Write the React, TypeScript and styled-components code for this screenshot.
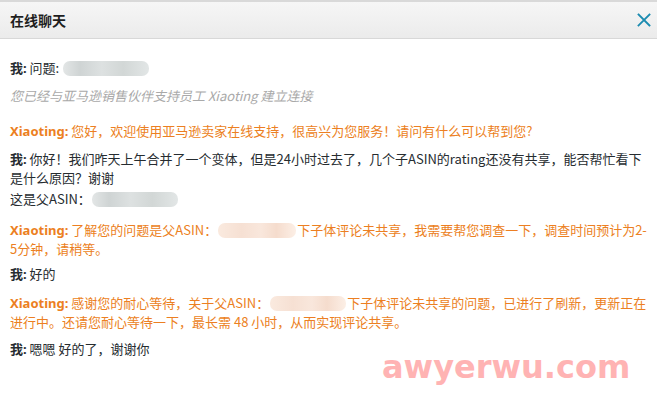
import React from "react";
import styled, { createGlobalStyle } from "styled-components";

const Global = createGlobalStyle`
  html, body { margin: 0; padding: 0; background: #fff; }
  body { font-family: "Noto Sans", "Noto Sans CJK SC", sans-serif; }
`;

const Dialog = styled.div`
  position: relative;
  width: 657px;
  height: 400px;
  background: #fff;
  overflow: hidden;
  border-top: 2px solid #d9d9d9;
  box-sizing: border-box;
`;

const Header = styled.div`
  height: 36px;
  display: flex;
  align-items: center;
  justify-content: space-between;
  padding: 0 4px 0 10px;
  background: linear-gradient(#f6f6f6, #ebebeb);
  border-bottom: 1px solid #d8d8d8;
`;

const Title = styled.div`
  font-family: "Noto Sans CJK SC", sans-serif;
  font-size: 14px;
  font-weight: 700;
  color: #1e1e1e;
`;

const Close = styled.button`
  border: 0;
  background: none;
  padding: 0;
  width: 18px;
  height: 18px;
  display: flex;
  align-items: center;
  justify-content: center;
  cursor: pointer;
`;

const Body = styled.div`
  padding: 19px 10px 0 10px;
  display: flex;
  flex-direction: column;
`;

const Msg = styled.div<{ $gap: number; $tone?: "me" | "agent" | "system" }>`
  margin-top: ${(p) => p.$gap}px;
  font-family: "Noto Sans CJK SC", sans-serif;
  font-size: 13px;
  line-height: 19px;
  color: ${(p) =>
    p.$tone === "agent" ? "#ec7f22" : p.$tone === "system" ? "#a9a9a9" : "#262c30"};
  font-style: ${(p) => (p.$tone === "system" ? "italic" : "normal")};
`;

const Who = styled.b`
  font-weight: 700;
  line-height: 1;
  font-family: "Noto Sans", "Noto Sans CJK SC", sans-serif;
`;

const Blur = styled.span<{ $w: number; $tint: "gray" | "peach" }>`
  display: inline-block;
  vertical-align: -3px;
  width: ${(p) => p.$w}px;
  height: 15px;
  border-radius: 7px;
  margin: 0 1px;
  background: ${(p) =>
    p.$tint === "gray"
      ? "linear-gradient(90deg, #e3e6e6 0%, #cfd4d4 20%, #dde1e1 45%, #d2d7d6 70%, #e2e6e6 100%)"
      : "linear-gradient(90deg, #faeadf 0%, #f6e0d3 30%, #f9e7dc 55%, #f5dccd 75%, #fcefe6 100%)"};
  filter: blur(0.6px);
`;

const Watermark = styled.div`
  position: absolute;
  left: 382px;
  top: 346px;
  font-family: "DejaVu Sans", sans-serif;
  font-weight: 700;
  font-size: 32px;
  color: #ffb3b3;
  pointer-events: none;
`;

export default function App() {
  return (
    <>
      <Global />
      <Dialog>
        <Header>
          <Title>在线聊天</Title>
          <Close aria-label="close">
            <svg width="14" height="14" viewBox="0 0 14 14">
              <path d="M1.5 1.5 L12.5 12.5 M12.5 1.5 L1.5 12.5" stroke="#1b8bb0" strokeWidth="1.8" strokeLinecap="square" />
            </svg>
          </Close>
        </Header>
        <Body>
          <Msg $gap={0} $tone="me">
            <Who>我:</Who> 问题: <Blur $w={86} $tint="gray" />
          </Msg>
          <Msg $gap={9} $tone="system">
            您已经与亚马逊销售伙伴支持员工 Xiaoting 建立连接
          </Msg>
          <Msg $gap={16} $tone="agent">
            <Who>Xiaoting:</Who> 您好，欢迎使用亚马逊卖家在线支持，很高兴为您服务！请问有什么可以帮到您?
          </Msg>
          <Msg $gap={9} $tone="me">
            <Who>我:</Who> 你好！我们昨天上午合并了一个变体，但是24小时过去了，几个子ASIN的rating还没有共享，能否帮忙看下是什么原因？谢谢
          </Msg>
          <Msg $gap={2} $tone="me">
            这是父ASIN：<Blur $w={86} $tint="gray" />
          </Msg>
          <Msg $gap={12} $tone="agent">
            <Who>Xiaoting:</Who> 了解您的问题是父ASIN：<Blur $w={78} $tint="peach" />下子体评论未共享，我需要帮您调查一下，调查时间预计为2-5分钟，请稍等。
          </Msg>
          <Msg $gap={6} $tone="me">
            <Who>我:</Who> 好的
          </Msg>
          <Msg $gap={10} $tone="agent">
            <Who>Xiaoting:</Who> 感谢您的耐心等待，关于父ASIN：<Blur $w={76} $tint="peach" />下子体评论未共享的问题，已进行了刷新，更新正在进行中。还请您耐心等待一下，最长需 48 小时，从而实现评论共享。
          </Msg>
          <Msg $gap={8} $tone="me">
            <Who>我:</Who> 嗯嗯 好的了，谢谢你
          </Msg>
        </Body>
        <Watermark>awyerwu.com</Watermark>
      </Dialog>
    </>
  );
}
